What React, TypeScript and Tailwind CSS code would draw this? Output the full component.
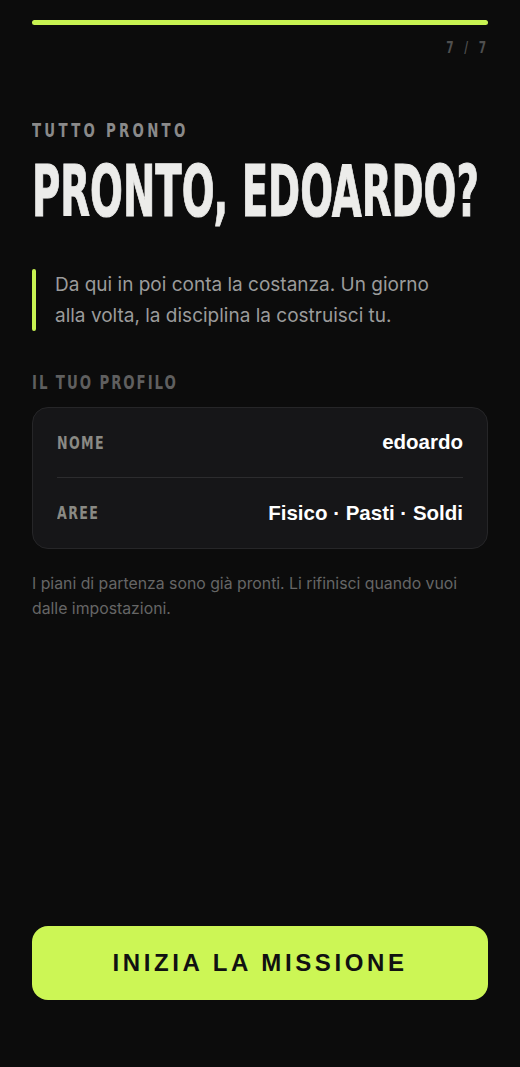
import React from "react";

const condensed = {
  fontFamily: '"DejaVu Sans", sans-serif',
  fontStretch: "condensed",
} as React.CSSProperties;

const rows = [
  { label: "NOME", value: "edoardo" },
  { label: "AREE", value: "Fisico · Pasti · Soldi" },
];

// narrow uppercase label; the font is squeezed horizontally to read like a condensed display face
function Label({ children, className = "", right = false }: { children: React.ReactNode; className?: string; right?: boolean }) {
  return (
    <span
      style={condensed}
      className={
        "inline-block whitespace-nowrap font-bold leading-none scale-x-[0.78] " +
        (right ? "origin-right " : "origin-left ") +
        className
      }
    >
      {children}
    </span>
  );
}

export default function App() {
  return (
    <div className="min-h-[1067px] bg-[#0c0c0c] flex flex-col px-8 pt-5 pb-[67px] font-['Inter',sans-serif]">
      {/* progress */}
      <div className="h-[5px] w-full rounded-full bg-[#c8f352]" />
      <div className="mt-[16px] flex justify-end">
        <Label right className="text-[15px] tracking-[0.3em] text-[#4f4f4f] -mr-[2px]">
          7 / 7
        </Label>
      </div>

      <div className="mt-[63px]">
        <Label className="text-[19px] tracking-[0.22em] text-[#8a8a8a]">TUTTO PRONTO</Label>
      </div>
      <div className="mt-[6px] h-[85px] overflow-hidden">
        <h1
          style={condensed}
          className="inline-block origin-top-left scale-x-[0.605] whitespace-nowrap text-[71px] font-bold leading-[85px] text-[#ececea] [-webkit-text-stroke:1px_#ececea]"
        >
          PRONTO, EDOARDO?
        </h1>
      </div>

      <div className="mt-[35px] flex gap-[19px]">
        <div className="w-1 rounded-full bg-[#c8f352]" />
        <p className="max-w-[400px] text-[19px] leading-[31px] text-[#9b9b9b]">
          Da qui in poi conta la costanza. Un giorno alla volta, la disciplina la costruisci tu.
        </p>
      </div>

      <div className="mt-[40px]">
        <Label className="text-[19px] tracking-[0.13em] text-[#5f5f5f]">IL TUO PROFILO</Label>
      </div>

      <div className="mt-[12px] rounded-2xl border border-[#262628] bg-[#161618] px-6">
        {rows.map((r, i) => (
          <div
            key={r.label}
            className={
              "flex h-[70px] items-center justify-between " + (i === 0 ? "border-b border-[#2c2c2e]" : "")
            }
          >
            <Label className="text-[18px] tracking-[0.1em] text-[#8a8a84]">{r.label}</Label>
            <span className="text-[20.5px] font-bold text-white font-['Liberation_Sans',sans-serif]">{r.value}</span>
          </div>
        ))}
      </div>

      <p className="mt-[22px] text-[15.8px] leading-[25px] text-[#666666]">
        I piani di partenza sono già pronti. Li rifinisci quando vuoi dalle impostazioni.
      </p>

      <div className="flex-1" />

      <button className="h-[74px] w-full rounded-2xl bg-[#ccf655] text-[24px] font-bold tracking-[0.15em] text-[#111111] font-['Liberation_Sans',sans-serif]">
        INIZIA LA MISSIONE
      </button>
    </div>
  );
}
